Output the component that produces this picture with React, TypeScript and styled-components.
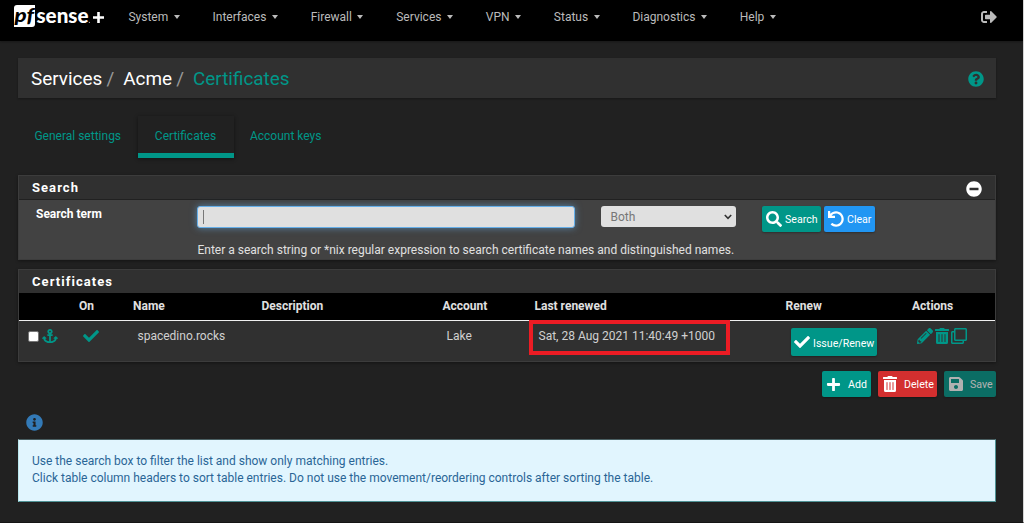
import React from "react";
import styled, { createGlobalStyle } from "styled-components";
import {
  FaAnchor, FaCheck, FaInfoCircle, FaMinusCircle, FaPencilAlt, FaPlus, FaQuestionCircle,
  FaRegClone, FaSave, FaSearch, FaSignOutAlt, FaTrashAlt, FaUndo,
} from "react-icons/fa";

const teal = "#009688";

const GlobalStyle = createGlobalStyle`
  * { box-sizing: border-box; }
  body {
    margin: 0;
    background: #212121;
    font-family: Roboto, "Liberation Sans", sans-serif;
    font-size: 12px;
    color: #e0e0e0;
  }
  svg { display: block; flex: none; }
`;

const Page = styled.div`
  width: 1024px;
  height: 523px;
  overflow: hidden;
  border-right: 1px solid #d4d4d4;
  border-bottom: 1px solid #151515;
`;

const Navbar = styled.header`
  height: 41px;
  padding: 4px 26px 0 13px;
  background: #000;
  display: flex;
  align-items: flex-start;
  box-shadow: 0 1px 2px rgba(0, 0, 0, 0.3);
`;

const Brand = styled.div`
  width: 115.4px;
  height: 24px;
  svg { overflow: visible; }
`;

const Menu = styled.nav`
  flex: 1;
  height: 25px;
  display: flex;
  align-items: center;
  gap: 32.8px;
`;

const MenuItem = styled.a`
  display: flex;
  align-items: center;
  gap: 5.5px;
  color: #bbb;
  &::after {
    content: "";
    margin-top: 1px;
    border: 3.5px solid transparent;
    border-width: 4px 3.5px;
    border-top-color: #bbb;
    border-bottom: 0;
  }
`;

const Logout = styled.div`
  height: 25px;
  display: flex;
  align-items: center;
  color: #bbb;
`;

const Main = styled.main`
  width: 978px;
  margin: 17px 0 0 18px;
`;

const Breadcrumb = styled.div`
  height: 40px;
  padding: 1px 12px 0 13px;
  display: flex;
  align-items: center;
  background: #303030;
  box-shadow: 0 1px 2px rgba(0, 0, 0, 0.3);
  font-size: 18.9px;
  color: #fff;
  svg { margin: 1px 0 0 auto; color: ${teal}; }
`;

const Slash = styled.span`
  margin: 0 9px 0 4.2px;
  color: #999;
`;

const Current = styled.span`
  color: ${teal};
`;

const Tabs = styled.div`
  display: flex;
  height: 42px;
  margin: 18px 0 17px;
`;

const Tab = styled.a<{ $active?: boolean }>`
  padding: 0 17.4px 2px 16.4px;
  height: 42px;
  display: flex;
  align-items: center;
  color: ${teal};
  ${(p) => p.$active && `
    border-bottom: 5px solid ${teal};
    padding-top: 5px;
    box-shadow: 0 1px 4px rgba(0, 0, 0, 0.45);
  `}
`;

const Panel = styled.section<{ $height: number }>`
  height: ${(p) => p.$height}px;
  border: 1px solid #3c3c3c;
  background: #303030;
  box-shadow: 0 1px 3px rgba(0, 0, 0, 0.4);
  margin-bottom: 9px;
`;

const PanelHeading = styled.h2`
  margin: 0;
  height: 23px;
  padding: 0 13px;
  display: flex;
  align-items: center;
  justify-content: space-between;
  font-size: 13px;
  font-weight: 700;
  letter-spacing: 1.05px;
  color: #fff;
  svg { margin-top: 2px; }
`;

const SearchBody = styled.div`
  height: 60px;
  border-top: 1px solid #212121;
  background: #424242;
  display: grid;
  grid-template-columns: 161px 404px 161px auto;
  align-items: start;
  padding: 6px 0 0 17px;
`;

const FieldLabel = styled.label`
  margin-top: 1px;
  font-weight: 700;
  color: #fff;
`;

const Input = styled.div`
  width: 378px;
  height: 22px;
  padding: 3px 5px;
  background: #e0e0e0;
  border: 1px solid #66afe9;
  border-radius: 3px;
  box-shadow: 0 0 7px rgba(102, 175, 233, 0.6);
`;

const Caret = styled.div`
  width: 1px;
  height: 14px;
  background: #777;
`;

const Help = styled.p`
  margin: 15px 0 0 0.5px;
  white-space: nowrap;
`;

const Select = styled.div`
  width: 135px;
  height: 21px;
  padding: 0 4px 0 9.5px;
  display: flex;
  align-items: center;
  justify-content: space-between;
  background: #e0e0e0;
  border-radius: 3px;
  color: #777;
`;

const ButtonRow = styled.div<{ $gap: number }>`
  display: flex;
  justify-content: flex-end;
  gap: ${(p) => p.$gap}px;
`;

const SearchButtons = styled(ButtonRow)`
  justify-content: flex-start;
`;

const Button = styled.button<{ $color?: string; $width: number; $height?: number; $gap?: number; $faded?: boolean }>`
  width: ${(p) => p.$width}px;
  height: ${(p) => p.$height ?? 26}px;
  padding: 0 4px;
  border: 0;
  border-radius: 2px;
  display: flex;
  align-items: center;
  gap: ${(p) => p.$gap ?? 3}px;
  background: ${(p) => p.$color ?? teal};
  color: #fff;
  font: 10.6px Roboto, sans-serif;
  white-space: nowrap;
  opacity: ${(p) => (p.$faded ? 0.65 : 1)};
  box-shadow: 0 1px 2px rgba(0, 0, 0, 0.3);
`;

const RenewButton = styled(Button)`
  padding-left: 3px;
  padding-top: 2px;
  svg { margin-top: -3px; }
`;

const HeadRow = styled.div`
  height: 28px;
  padding: 0 0 2px 60px;
  display: grid;
  grid-template-columns: 54px 128.5px 181px 92px 251px 126.5px auto;
  align-items: center;
  background: #000;
  border-bottom: 1px solid #f0f0f0;
  color: #e0e0e0;
  font-weight: 700;
`;

const Row = styled.div`
  height: 40px;
  padding: 7px 0 0 9px;
  display: grid;
  grid-template-columns: 55px 54.5px 309px 92px 252.5px 126px auto;
  align-items: start;
  color: #d0d0d0;
`;

const Cell = styled.div`
  padding-top: 1px;
`;

const IconCell = styled.div<{ $gap?: number }>`
  display: flex;
  align-items: center;
  gap: ${(p) => p.$gap ?? 0}px;
  color: ${teal};
`;

const Checkbox = styled.span`
  width: 11px;
  height: 11px;
  margin: 1px 3px 0 0;
  border: 1px solid #767676;
  border-radius: 2px;
  background: #fff;
`;

const Highlight = styled.div`
  width: 201px;
  height: 35px;
  margin: -9px 0 0 -10px;
  padding: 5px 6px;
  border: 4px solid #ec1c24;
  white-space: nowrap;
`;

const Info = styled.div`
  margin: 17px 0 8px 8px;
  color: #337ab7;
`;

const Alert = styled.div`
  height: 63px;
  padding: 13px 13px;
  border: 1px solid #4f9295;
  border-top-color: #4a5f62;
  border-left-color: #b9e7ee;
  background: #e1f5fe;
  color: #2a6596;
  line-height: 17px;
`;

const Logo = () => (
  <svg width="92" height="24" viewBox="0 0 92 24">
    <path d="M4 1H22V20Q22 23 19 23H1V4Q1 1 4 1Z" fill="#fff" />
    <text x="1.5" y="18" fontFamily="Lato" fontWeight="900" fontStyle="italic" fontSize="19.5" fill="#000" textLength="19.5" lengthAdjust="spacingAndGlyphs">pf</text>
    <text x="23.5" y="18.6" fontFamily="Lato" fontWeight="900" fontSize="20" fill="#fff" textLength="52" lengthAdjust="spacingAndGlyphs">sense</text>
    <circle cx="76.4" cy="18.4" r="0.6" fill="#aaa" />
    <path d="M85.5 8V19M80 13.5H91" stroke="#fff" strokeWidth="2.6" />
  </svg>
);

const menus = ["System", "Interfaces", "Firewall", "Services", "VPN", "Status", "Diagnostics", "Help"];

export default function App() {
  return (
    <Page>
      <GlobalStyle />
      <Navbar>
        <Brand><Logo /></Brand>
        <Menu>{menus.map((m) => <MenuItem key={m}>{m}</MenuItem>)}</Menu>
        <Logout><FaSignOutAlt size={16} /></Logout>
      </Navbar>
      <Main>
        <Breadcrumb>
          Services<Slash>/</Slash>Acme<Slash>/</Slash><Current>Certificates</Current>
          <FaQuestionCircle size={16} />
        </Breadcrumb>
        <Tabs>
          <Tab>General settings</Tab>
          <Tab $active>Certificates</Tab>
          <Tab>Account keys</Tab>
        </Tabs>
        <Panel $height={85}>
          <PanelHeading>Search<FaMinusCircle size={16} /></PanelHeading>
          <SearchBody>
            <FieldLabel>Search term</FieldLabel>
            <div>
              <Input><Caret /></Input>
              <Help>Enter a search string or *nix regular expression to search certificate names and distinguished names.</Help>
            </div>
            <Select>
              Both
              <svg width="8" height="6" viewBox="0 0 8 6"><path d="M0.8 1L4 4.4L7.2 1" fill="none" stroke="#333" strokeWidth="1.6" /></svg>
            </Select>
            <SearchButtons $gap={3}>
              <Button $width={59}><FaSearch size={16} />Search</Button>
              <Button $width={51} $color="#2196f3"><FaUndo size={16} />Clear</Button>
            </SearchButtons>
          </SearchBody>
        </Panel>
        <Panel $height={93}>
          <PanelHeading>Certificates</PanelHeading>
          <HeadRow>
            <span>On</span><span>Name</span><span>Description</span><span>Account</span>
            <span>Last renewed</span><span>Renew</span><span>Actions</span>
          </HeadRow>
          <Row>
            <IconCell><Checkbox /><FaAnchor size={16} /></IconCell>
            <IconCell><FaCheck size={16} /></IconCell>
            <Cell>spacedino.rocks</Cell>
            <Cell>Lake</Cell>
            <Cell><Highlight>Sat, 28 Aug 2021 11:40:49 +1000</Highlight></Cell>
            <RenewButton $width={86} $height={28}><FaCheck size={16} />Issue/Renew</RenewButton>
            <IconCell $gap={1}><FaPencilAlt size={16} /><FaTrashAlt size={16} /><FaRegClone size={16} /></IconCell>
          </Row>
        </Panel>
        <ButtonRow $gap={7}>
          <Button $width={49} $gap={7}><FaPlus size={15} />Add</Button>
          <Button $width={59} $gap={6} $color="#d32f2f"><FaTrashAlt size={16} />Delete</Button>
          <Button $width={52} $gap={6} $faded><FaSave size={16} />Save</Button>
        </ButtonRow>
        <Info><FaInfoCircle size={17} /></Info>
        <Alert>
          Use the search box to filter the list and show only matching entries.<br />
          Click table column headers to sort table entries. Do not use the movement/reordering controls after sorting the table.
        </Alert>
      </Main>
    </Page>
  );
}
